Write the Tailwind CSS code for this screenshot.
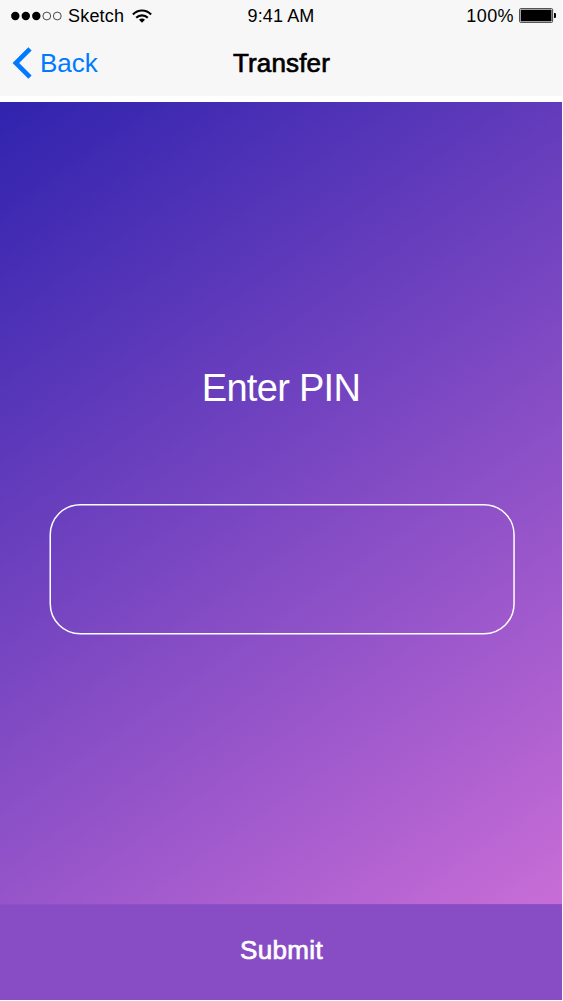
<!DOCTYPE html>
<html lang="en">
<head>
<meta charset="utf-8">
<title>Transfer</title>
<script src="https://cdn.jsdelivr.net/npm/@tailwindcss/browser@4"></script>
</head>
<body class="bg-white overflow-hidden">
<div class="w-[562px] h-[1000px] flex flex-col font-['Liberation_Sans',Arial,sans-serif]">
  <header class="h-24 bg-[#f7f7f7] mb-1.5 shrink-0">
    <div class="h-8 grid grid-cols-3 items-center text-[18px] leading-8 text-black">
      <div class="flex items-center pl-[11px]">
        <svg class="w-[52px] h-[10px] -mt-px" viewBox="0 0 52 10">
          <circle cx="4.3" cy="5" r="4.2"/><circle cx="14.8" cy="5" r="4.2"/><circle cx="25.3" cy="5" r="4.2"/>
          <g fill="none" stroke="#000" stroke-width=".7"><circle cx="35.8" cy="5" r="3.9"/><circle cx="46.3" cy="5" r="3.9"/></g>
        </svg>
        <span class="ml-[5px] tracking-[0.2px]">Sketch</span>
        <svg class="w-5 h-[14px] ml-2 -mt-px" viewBox="0 0 20 14">
          <g fill="none" stroke="#000" stroke-width="2.2"><path d="M.9 5.4C6 .2 14 .2 19.1 5.4"/><path d="M4.2 8.8c3.2-3.3 8.4-3.3 11.6 0"/></g>
          <path d="M7 10.8c1.7-1.7 4.3-1.7 6 0l-3 3z"/>
        </svg>
      </div>
      <div class="text-center tracking-[0.1px]">9:41 AM</div>
      <div class="flex items-center justify-end pr-1.5">
        <span class="tracking-[0.4px]">100%</span>
        <svg class="w-[37px] h-[15px] ml-[5px] -mt-px" viewBox="0 0 37 15">
          <rect x=".6" y=".6" width="33" height="13.8" rx="1" fill="#f7f7f7" stroke="#444" stroke-width="1"/>
          <rect x="1.7" y="1.7" width="30.8" height="11.6"/><path d="M35 5h1.2l.8.8v3.4l-.8.8H35z"/>
        </svg>
      </div>
    </div>
    <div class="h-16 grid grid-cols-3 items-start text-[26px] leading-[62px]">
      <div class="flex items-center pl-3 text-[#007aff]">
        <svg class="w-5 h-8" viewBox="0 0 20 32" fill="none" stroke="currentColor" stroke-width="4.6"><path d="M18 1.8 3.8 16 18 30.2"/></svg>
        <span class="ml-2">Back</span>
      </div>
      <h1 class="text-center pl-px text-black tracking-[0.15px] [-webkit-text-stroke:0.7px_black]">Transfer</h1>
    </div>
  </header>
  <main class="flex-1 flex flex-col items-center bg-[linear-gradient(145deg,#3023ae,#c86dd7)]">
    <label for="pin" class="mt-[264px] h-11 leading-11 text-[38px] tracking-[-0.7px] text-white">Enter PIN</label>
    <div class="mt-[93px] ml-[2px] w-[466px] h-[132px] grid">
      <svg class="col-start-1 row-start-1 w-[466px] h-[132px]" viewBox="0 0 466 132" fill="none" stroke="#fff" stroke-width="1.5">
        <rect x="1.25" y="1.7" width="463.8" height="129" rx="30"/>
      </svg>
      <input id="pin" type="password" class="col-start-1 row-start-1 px-8 rounded-[30px] outline-none bg-transparent text-white text-4xl">
    </div>
  </main>
  <button class="h-24 shrink-0 bg-[#884dc5] border-t border-[#8f51c7] text-white text-[26px] leading-[88px] pb-1.5 pl-px tracking-[0.35px] [-webkit-text-stroke:0.7px_white]">Submit</button>
</div>
</body>
</html>
